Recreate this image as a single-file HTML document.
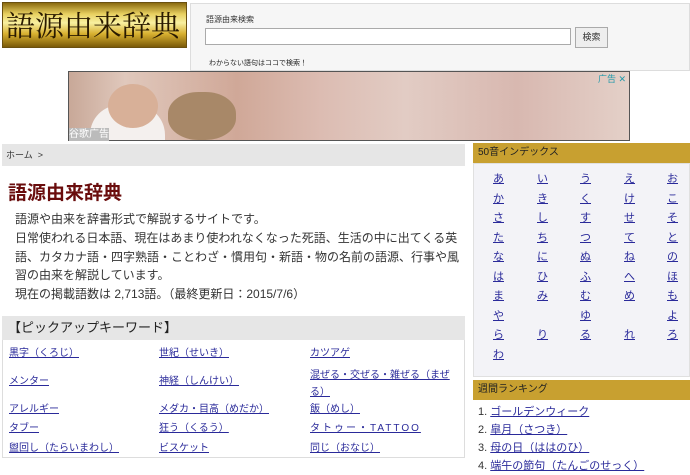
<!DOCTYPE html>
<html><head><meta charset="utf-8"><style>
*{margin:0;padding:0;box-sizing:border-box}
body{width:690px;height:458px;overflow:hidden;background:#fff;font-family:"Liberation Sans","Noto Sans CJK JP",sans-serif;position:relative;color:#333}
.a{position:absolute;white-space:nowrap}
a{color:#2a2a9a;text-decoration:underline}
</style></head><body>
<div class="a" style="left:2px;top:2px;width:185px;height:46px;background:linear-gradient(180deg,#8a6a10 0%,#e8d060 25%,#f8f0a0 45%,#d8b030 70%,#7a5a08 100%);border:1px solid #6a5010"></div>
<div class="a" style="left:6px;top:6px;font:29px 'Noto Serif CJK SC',serif;color:#2a1a00;line-height:38px">語源由来辞典</div>
<div class="a" style="left:190px;top:3px;width:500px;height:68px;background:#f6f6f6;border:1px solid #ddd"></div>
<div class="a" style="left:206px;top:14px;font-size:8px;color:#333">語源由来検索</div>
<div class="a" style="left:205px;top:28px;width:366px;height:17px;background:#fff;border:1px solid #aaa"></div>
<div class="a" style="left:575px;top:27px;width:33px;height:21px;background:#eee;border:1px solid #aaa;font-size:9px;text-align:center;line-height:19px">検索</div>
<div class="a" style="left:209px;top:58px;font-size:7px;color:#222">わからない語句はココで検索！</div>
<div class="a" style="left:68px;top:71px;width:562px;height:70px;border:1px solid #555;background:linear-gradient(90deg,#c8a898 0%,#e0c8bc 10%,#d0a898 30%,#dcbcb2 45%,#e2ccc4 60%,#d8b8b0 80%,#e4d0c8 100%)"></div>
<div class="a" style="left:90px;top:105px;width:75px;height:35px;background:#f4f0ee;border-radius:30px 30px 0 0"></div>
<div class="a" style="left:108px;top:84px;width:50px;height:44px;background:#d8b098;border-radius:50%"></div>
<div class="a" style="left:168px;top:92px;width:68px;height:48px;background:#a88868;border-radius:45%"></div>
<div class="a" style="left:69px;top:128px;width:40px;height:13px;background:#bbb;color:#fff;font-size:10px;line-height:13px">谷歌广告</div>
<div class="a" style="left:598px;top:72px;font-size:9px;color:#29a">广告 ✕</div>
<div class="a" style="left:2px;top:144px;width:463px;height:22px;background:#e6e6e6;font-size:9px;line-height:22px;padding-left:4px;color:#333">ホーム &nbsp;&gt;</div>
<div class="a" style="left:8px;top:178px;font-size:19px;font-weight:bold;color:#6a0d0d">語源由来辞典</div>
<div class="a" style="left:15px;top:210px;width:450px;white-space:normal;font-size:12px;line-height:18.8px;color:#333">語源や由来を辞書形式で解説するサイトです。<br>日常使われる日本語、現在はあまり使われなくなった死語、生活の中に出てくる英語、カタカナ語・四字熟語・ことわざ・慣用句・新語・物の名前の語源、行事や風習の由来を解説しています。<br>現在の掲載語数は 2,713語。（最終更新日：2015/7/6）</div>
<div class="a" style="left:2px;top:316px;width:463px;height:142px;border:1px solid #ddd;background:#fff"></div>
<div class="a" style="left:2px;top:316px;width:463px;height:24px;background:#e6e6e6;font-size:13px;line-height:24px;padding-left:6px;color:#222">【ピックアップキーワード】</div>
<div class="a" style="font-size:10px;line-height:13px;left:0;top:0">
<a class="a" style="left:9px;top:347px">黒字（くろじ）</a><a class="a" style="left:159px;top:347px">世紀（せいき）</a><a class="a" style="left:310px;top:347px">カツアゲ</a>
<a class="a" style="left:9px;top:375px">メンター</a><a class="a" style="left:159px;top:375px">神経（しんけい）</a><a class="a" style="left:310px;top:367px;width:145px;white-space:normal;line-height:17px">混ぜる・交ぜる・雑ぜる（まぜる）</a>
<a class="a" style="left:9px;top:403px">アレルギー</a><a class="a" style="left:159px;top:403px">メダカ・目高（めだか）</a><a class="a" style="left:310px;top:403px">飯（めし）</a>
<a class="a" style="left:9px;top:422px">タブー</a><a class="a" style="left:159px;top:422px">狂う（くるう）</a><a class="a" style="left:310px;top:422px;letter-spacing:2px">タトゥー・TATTOO</a>
<a class="a" style="left:9px;top:442px">盥回し（たらいまわし）</a><a class="a" style="left:159px;top:442px">ビスケット</a><a class="a" style="left:310px;top:442px">同じ（おなじ）</a>
</div>
<div class="a" style="left:473px;top:143px;width:217px;height:20px;background:#c8a030;font-size:10px;line-height:20px;padding-left:5px;color:#222">50音インデックス</div>
<div class="a" style="left:473px;top:163px;width:217px;height:214px;background:#f3f3f7;border:1px solid #e0e0e0"></div>
<div class="a" id="g" style="left:0;top:0;font-size:11px"></div>
<div class="a" style="left:473px;top:380px;width:217px;height:20px;background:#c8a030;font-size:10px;line-height:20px;padding-left:5px;color:#222">週間ランキング</div>
<div class="a" style="left:478px;top:403px;font-size:11px;line-height:18px;color:#333">1. <a>ゴールデンウィーク</a><br>2. <a>皐月（さつき）</a><br>3. <a>母の日（ははのひ）</a><br>4. <a>端午の節句（たんごのせっく）</a></div>
<script>
var r=["あいうえお","かきくけこ","さしすせそ","たちつてと","なにぬねの","はひふへほ","まみむめも","や　ゆ　よ","らりるれろ","わ"];
var xs=[493,537,580,624,667],h="";
r.forEach(function(s,i){for(var j=0;j<s.length;j++){if(s[j]!="　")h+='<a class="a" style="left:'+xs[j]+'px;top:'+(170+i*19.5)+'px">'+s[j]+'</a>';}});
document.getElementById("g").innerHTML=h;
</script>
</body></html>
